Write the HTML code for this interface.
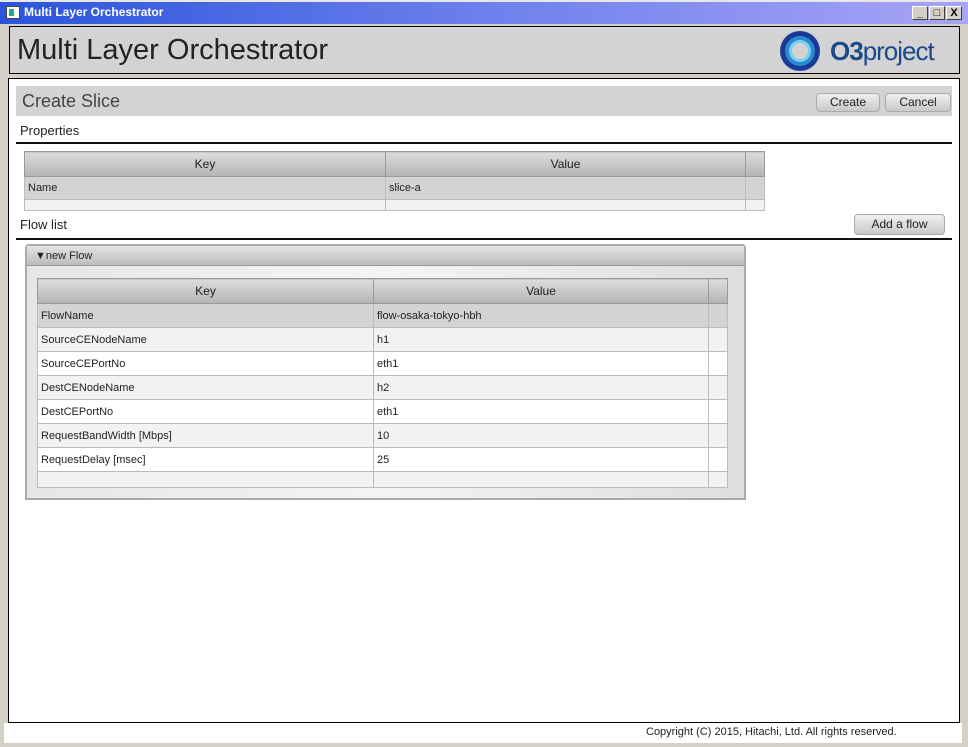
<!DOCTYPE html>
<html><head><meta charset="utf-8"><style>
*{margin:0;padding:0;box-sizing:border-box}
body{width:968px;height:747px;background:#d4d0c8;font-family:"Liberation Sans",sans-serif;position:relative;overflow:hidden;color:#222}
.abs{position:absolute}
#tb{left:0;top:0;width:968px;height:24px;background:linear-gradient(90deg,#2a54dc,#6d80ec 50%,#a8a4f6);border-top:2px solid #e8e8e8}
#tb .t{left:24px;top:3px;color:#fff;font-weight:bold;font-size:12px}
.wb{top:4px;width:16px;height:14px;background:#d4d0c8;border:1px solid;border-color:#fff #404040 #404040 #fff;font-size:11px;font-weight:bold;text-align:center;line-height:12px;color:#000}
#hdr{left:9px;top:26px;width:951px;height:48px;background:#d3d3d3;border:1px solid #000}
#main{left:8px;top:78px;width:952px;height:645px;background:#fff;border:1px solid #000}
#foot{left:4px;top:723px;width:958px;height:20px;background:#fff}
.btn{background:linear-gradient(#f0f0f0,#c8c8c8);border:1px solid #aaa;border-radius:4px;font-size:12px;text-align:center;color:#222}
table{border-collapse:collapse;font-size:11px;table-layout:fixed}
td{border:1px solid #bbb;padding:0 3px;overflow:hidden}
tr{height:24px}
th{height:25px;background:linear-gradient(#dcdcdc,#b4b4b4);border:1px solid #999;font-weight:normal;font-size:12px}
</style></head><body>
<div id="tb" class="abs">
 <div class="abs" style="left:6px;top:4px;width:14px;height:13px;background:#fff;border:1px solid #444"><div style="margin:2px;width:5px;height:7px;background:#2a8"></div></div>
 <div class="abs t">Multi Layer Orchestrator</div>
 <div class="abs wb" style="left:912px">_</div>
 <div class="abs wb" style="left:929px">□</div>
 <div class="abs wb" style="left:946px">X</div>
</div>
<div id="hdr" class="abs">
 <div class="abs" style="left:7px;top:7px;font-size:29px;color:#222">Multi Layer Orchestrator</div>
 <svg class="abs" style="left:768px;top:1px" width="44" height="46"><circle cx="22" cy="23" r="20" fill="#1a3a96"/><circle cx="22" cy="23" r="15" fill="#2a8ad0"/><circle cx="22" cy="23" r="11" fill="#7ad0f0"/><circle cx="22" cy="23" r="8" fill="#d3d3d3"/></svg>
 <div class="abs" style="left:820px;top:9px;font-size:26px;color:#1a4a8a;letter-spacing:-1px"><b>O3</b>project</div>
</div>
<div id="main" class="abs">
 <div class="abs" style="left:7px;top:7px;width:936px;height:30px;background:#d3d3d3">
  <div class="abs" style="left:6px;top:5px;font-size:18px;color:#444">Create Slice</div>
  <div class="abs btn" style="left:800px;top:7px;width:64px;height:19px;line-height:17px">Create</div>
  <div class="abs btn" style="left:869px;top:7px;width:66px;height:19px;line-height:17px">Cancel</div>
 </div>
 <div class="abs" style="left:11px;top:44px;font-size:13px">Properties</div>
 <div class="abs" style="left:7px;top:63px;width:936px;height:2px;background:#111"></div>
 <table class="abs" style="left:15px;top:72px;width:741px;border:1px solid #999">
  <tr><th style="width:361px">Key</th><th style="width:360px">Value</th><th></th></tr>
  <tr style="background:#d3d3d3;height:23px"><td>Name</td><td>slice-a</td><td></td></tr>
  <tr style="background:#f2f2f2;height:11px"><td></td><td></td><td></td></tr>
 </table>
 <div class="abs" style="left:11px;top:138px;font-size:13px">Flow list</div>
 <div class="abs btn" style="left:845px;top:135px;width:91px;height:21px;line-height:19px">Add a flow</div>
 <div class="abs" style="left:7px;top:159px;width:936px;height:2px;background:#111"></div>
 <div class="abs" style="left:16px;top:165px;width:721px;height:256px;background:linear-gradient(90deg,#e6e6e6,#f4f4f4 50%,#dedede);border:2px solid #aaa;border-radius:4px 4px 0 0">
  <div style="height:20px;background:linear-gradient(#e4e4e4,#bcbcbc);border-bottom:1px solid #999;font-size:11px;padding:4px 8px">▼new Flow</div>
  <table class="abs" style="left:10px;top:32px;width:691px;border:1px solid #999">
   <tr><th style="width:336px">Key</th><th style="width:335px">Value</th><th></th></tr>
   <tr style="background:#d3d3d3"><td>FlowName</td><td>flow-osaka-tokyo-hbh</td><td></td></tr>
   <tr style="background:#f2f2f2"><td>SourceCENodeName</td><td>h1</td><td></td></tr>
   <tr style="background:#fff"><td>SourceCEPortNo</td><td>eth1</td><td></td></tr>
   <tr style="background:#f2f2f2"><td>DestCENodeName</td><td>h2</td><td></td></tr>
   <tr style="background:#fff"><td>DestCEPortNo</td><td>eth1</td><td></td></tr>
   <tr style="background:#f2f2f2"><td>RequestBandWidth [Mbps]</td><td>10</td><td></td></tr>
   <tr style="background:#fff"><td>RequestDelay [msec]</td><td>25</td><td></td></tr>
   <tr style="background:#f2f2f2;height:16px"><td></td><td></td><td></td></tr>
  </table>
 </div>
</div>
<div id="foot" class="abs"><div class="abs" style="left:642px;top:3px;font-size:11px">Copyright (C) 2015, Hitachi, Ltd. All rights reserved.</div></div>
</body></html>
